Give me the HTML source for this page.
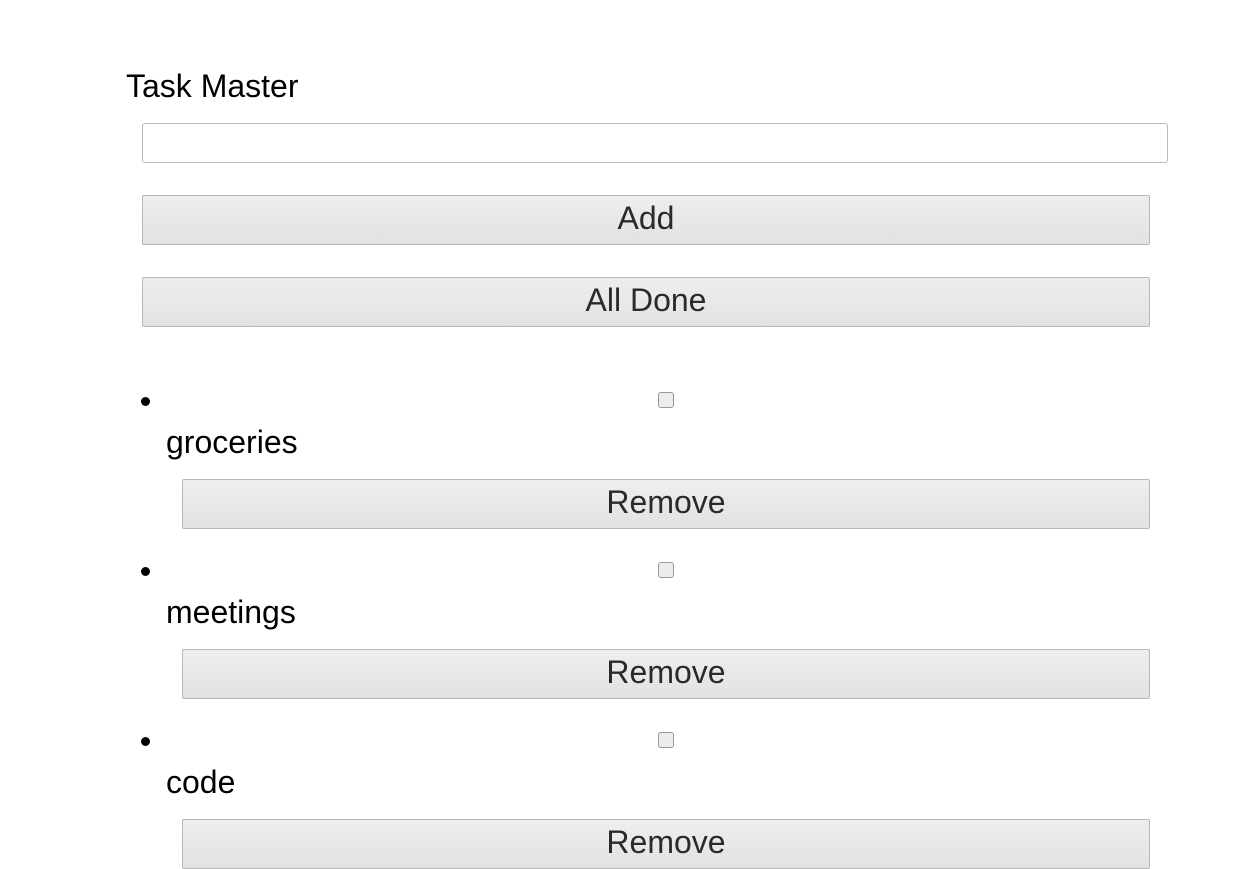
<!DOCTYPE html>
<html><head><style>
body{margin:0;width:1260px;height:845px;overflow:hidden;background:#fff;font-family:"Liberation Sans",sans-serif;position:relative}
.a{position:absolute}
.t{font-size:32px;color:#000;line-height:1}
.btn{position:absolute;box-sizing:border-box;border:1px solid #b8b8b8;border-radius:2px;background:linear-gradient(#eeeeee,#e2e2e2);color:#2a2a2a;font-size:32px;text-align:center;line-height:44px}
.inp{position:absolute;box-sizing:border-box;border:1px solid #bbb;border-radius:3px;background:#fff}
.cb{position:absolute;width:16px;height:16px;box-sizing:border-box;border:1px solid #999;border-radius:3px;background:#ececec}
.dot{position:absolute;width:9px;height:9px;border-radius:50%;background:#000}
</style></head><body>
<div class="a t" style="left:126px;top:70px">Task Master</div>
<div class="inp" style="left:142px;top:123px;width:1026px;height:40px"></div>
<div class="btn" style="left:142px;top:195px;width:1008px;height:50px">Add</div>
<div class="btn" style="left:142px;top:277px;width:1008px;height:50px">All Done</div>

<div class="dot" style="left:141px;top:397px"></div>
<div class="cb" style="left:658px;top:392px"></div>
<div class="a t" style="left:166px;top:426px">groceries</div>
<div class="btn" style="left:182px;top:479px;width:968px;height:50px">Remove</div>

<div class="dot" style="left:141px;top:567px"></div>
<div class="cb" style="left:658px;top:562px"></div>
<div class="a t" style="left:166px;top:596px">meetings</div>
<div class="btn" style="left:182px;top:649px;width:968px;height:50px">Remove</div>

<div class="dot" style="left:141px;top:737px"></div>
<div class="cb" style="left:658px;top:732px"></div>
<div class="a t" style="left:166px;top:766px">code</div>
<div class="btn" style="left:182px;top:819px;width:968px;height:50px">Remove</div>
</body></html>
